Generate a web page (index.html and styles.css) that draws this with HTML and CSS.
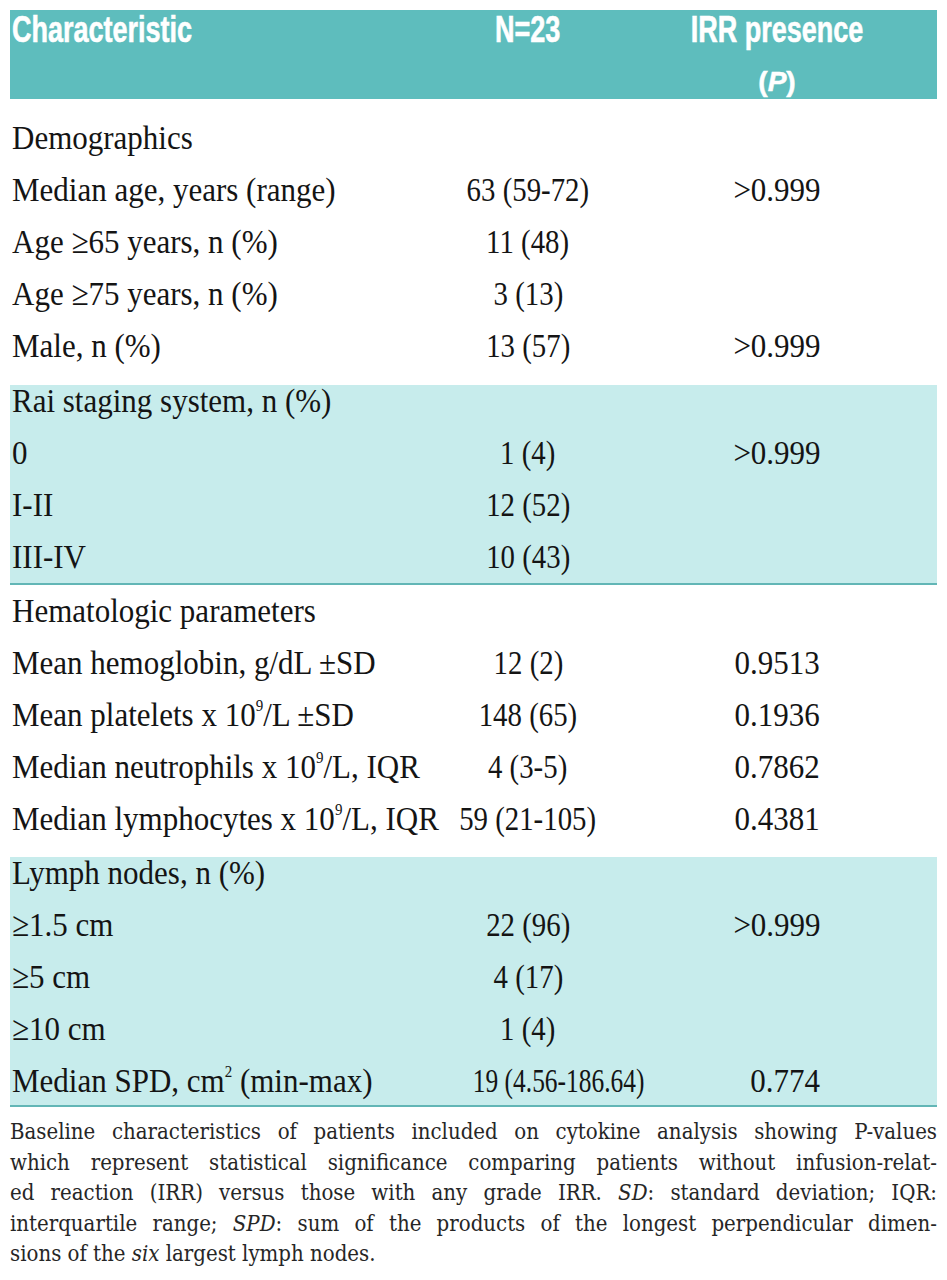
FILE: index.html
```html
<!DOCTYPE html>
<html lang="en">
<head>
<meta charset="utf-8">
<title>Baseline characteristics</title>
<link rel="stylesheet" href="styles.css">
</head>
<body>
<div class="page">
  <div class="thead">
    <div class="hcell h-left"><span class="hx">Characteristic</span></div>
    <div class="hcell h-center"><span class="hx">N=23</span></div>
    <div class="hcell h-center">
      <span class="hx">IRR presence</span>
      <div class="hp">(<i>P</i>)</div>
    </div>
  </div>

  <div class="section sec-demo">
    <div class="row"><span class="c1">Demographics</span><span class="c2"></span><span class="c3"></span></div>
    <div class="row"><span class="c1">Median age, years (range)</span><span class="c2"><span class="num">63 (59-72)</span></span><span class="c3">&gt;0.999</span></div>
    <div class="row"><span class="c1">Age ≥65 years, n (%)</span><span class="c2"><span class="num">11 (48)</span></span><span class="c3"></span></div>
    <div class="row"><span class="c1">Age ≥75 years, n (%)</span><span class="c2"><span class="num">3 (13)</span></span><span class="c3"></span></div>
    <div class="row"><span class="c1">Male, n (%)</span><span class="c2"><span class="num">13 (57)</span></span><span class="c3">&gt;0.999</span></div>
  </div>

  <div class="section band sec-rai">
    <div class="row"><span class="c1">Rai staging system, n (%)</span><span class="c2"></span><span class="c3"></span></div>
    <div class="row"><span class="c1">0</span><span class="c2"><span class="num">1 (4)</span></span><span class="c3">&gt;0.999</span></div>
    <div class="row"><span class="c1">I-II</span><span class="c2"><span class="num">12 (52)</span></span><span class="c3"></span></div>
    <div class="row"><span class="c1">III-IV</span><span class="c2"><span class="num">10 (43)</span></span><span class="c3"></span></div>
  </div>

  <div class="section sec-hema">
    <div class="row"><span class="c1">Hematologic parameters</span><span class="c2"></span><span class="c3"></span></div>
    <div class="row"><span class="c1">Mean hemoglobin, g/dL ±SD</span><span class="c2"><span class="num">12 (2)</span></span><span class="c3">0.9513</span></div>
    <div class="row"><span class="c1">Mean platelets x 10<sup class="sup">9</sup>/L ±SD</span><span class="c2"><span class="num">148 (65)</span></span><span class="c3">0.1936</span></div>
    <div class="row"><span class="c1">Median neutrophils x 10<sup class="sup">9</sup>/L, IQR</span><span class="c2"><span class="num">4 (3-5)</span></span><span class="c3">0.7862</span></div>
    <div class="row"><span class="c1">Median lymphocytes x 10<sup class="sup">9</sup>/L, IQR</span><span class="c2"><span class="num">59 (21-105)</span></span><span class="c3">0.4381</span></div>
  </div>

  <div class="section band sec-lymph">
    <div class="row"><span class="c1">Lymph nodes, n (%)</span><span class="c2"></span><span class="c3"></span></div>
    <div class="row"><span class="c1">≥1.5 cm</span><span class="c2"><span class="num">22 (96)</span></span><span class="c3">&gt;0.999</span></div>
    <div class="row"><span class="c1">≥5 cm</span><span class="c2"><span class="num">4 (17)</span></span><span class="c3"></span></div>
    <div class="row"><span class="c1">≥10 cm</span><span class="c2"><span class="num">1 (4)</span></span><span class="c3"></span></div>
    <div class="row"><span class="c1">Median SPD, cm<sup class="sup">2</sup> (min-max)</span><span class="c2 c2-wide"><span class="num num-tight">19 (4.56-186.64)</span></span><span class="c3 c3-shift">0.774</span></div>
  </div>

  <div class="caption">
    <span class="cl">Baseline characteristics of patients included on cytokine analysis showing P-values</span>
    <span class="cl">which represent statistical significance comparing patients without infusion-relat-</span>
    <span class="cl">ed reaction (IRR) versus those with any grade IRR. <i>SD</i>: standard deviation; IQR:</span>
    <span class="cl">interquartile range; <i>SPD</i>: sum of the products of the longest perpendicular dimen-</span>
    <span class="cl last">sions of the <i>six</i> largest lymph nodes.</span>
  </div>
</div>
</body>
</html>
```

FILE: styles.css
```css
html, body {
  margin: 0;
  padding: 0;
  background: #ffffff;
}

.page {
  padding: 10px 10px 0 10px;
  width: 927px;
  font-family: "Liberation Serif", "Times New Roman", serif;
  color: #141414;
}

/* header */
.thead {
  display: grid;
  grid-template-columns: 420px 196px 1fr;
  padding: 0 9px 0 0;
  background: #5ebdbd;
  color: #ffffff;
  font-family: "Liberation Sans", Arial, sans-serif;
  font-weight: 700;
  font-size: 36px;
  line-height: 40px;
  height: 89px;
  box-sizing: border-box;
  -webkit-text-stroke: 0.6px #ffffff;
}

.hcell {
  white-space: nowrap;
}

.h-left {
  padding-left: 2px;
}

.h-left .hx {
  transform-origin: 0 50%;
}

.h-center {
  text-align: center;
}

.hx {
  display: inline-block;
  transform: scaleX(0.75);
  transform-origin: 50% 50%;
}

.hp {
  margin-top: 19px;
  font-size: 28px;
  line-height: 26px;
  -webkit-text-stroke: 0.5px #ffffff;
}

/* body rows */
.section {
  display: flex;
  flex-direction: column;
  gap: 18px;
  padding-right: 9px;
}

.band {
  background: #c7ecec;
  border-bottom: 2px solid #62b6b6;
}

.sec-demo {
  padding-top: 23px;
  padding-bottom: 21px;
}

.sec-rai {
  padding-top: 0;
  padding-bottom: 8px;
}

.sec-hema {
  padding-top: 10px;
  padding-bottom: 20px;
}

.sec-lymph {
  padding-top: 0;
  padding-bottom: 6px;
}

.row {
  display: grid;
  grid-template-columns: 420px 196px 1fr;
  height: 34px;
  font-size: 31px;
  line-height: 34px;
  white-space: nowrap;
  transform: scaleY(1.12);
  transform-origin: 0 27px;
}

.c1 {
  padding-left: 2px;
}

.c2, .c3 {
  text-align: center;
}

.num {
  display: inline-block;
  transform: scaleX(0.93);
  transform-origin: 50% 50%;
}

.num-tight {
  transform: scaleX(0.82);
}

.c2-wide {
  padding-left: 24px;
}

.c3-shift {
  padding-left: 16px;
}

.sup {
  font-size: 15px;
  line-height: 0;
  vertical-align: 13px;
}

/* caption */
.caption {
  margin-top: 10px;
  font-family: "DejaVu Serif Condensed", "DejaVu Serif", serif;
  font-stretch: condensed;
  font-size: 22px;
  line-height: 30.5px;
  color: #262626;
}

.cl {
  display: block;
  white-space: nowrap;
  text-align: justify;
  text-align-last: justify;
}

.cl.last {
  text-align-last: left;
}
```
